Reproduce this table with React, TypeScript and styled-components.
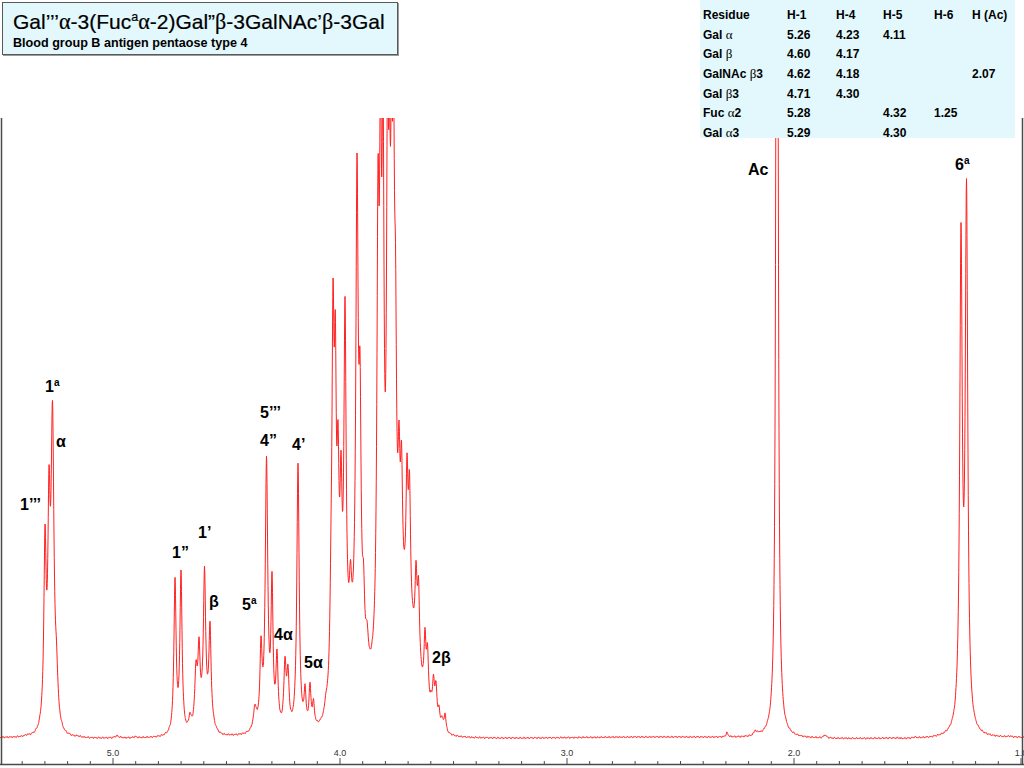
import React from "react";
import styled, { createGlobalStyle } from "styled-components";

const GlobalStyle = createGlobalStyle`
  html, body {
    margin: 0;
    padding: 0;
    background: #ffffff;
  }
  body {
    font-family: "Liberation Sans", Arial, sans-serif;
  }
`;

// chart geometry
const BASE = 738;
const TOP = 118;
const AXIS_Y = 764;
const ppmToX = (ppm: number) => 113 + (5 - ppm) * 227;

// [x, yTop, halfWidth] – narrow lines whose tops are matched
const LINES: [number, number, number][] = [
  // 5.3 region
  [45, 523, 1.3],
  [49, 463, 1.3],
  [52.5, 399, 1.7],
  [56.5, 640, 1.5],
  // 4.71
  [175, 577, 1.3],
  [181, 570, 1.3],
  // 4.62 / 4.60
  [190, 712, 1.5],
  [196, 660, 1.5],
  [199, 637, 1.3],
  [204.5, 566, 1.3],
  [210, 622, 1.3],
  // 4.3 region
  [255, 705, 2],
  [261, 637, 1.3],
  [266.5, 457, 1.5],
  [272, 572, 1.2],
  [277, 650, 1.3],
  [285, 657, 1.4],
  [288, 665, 1.3],
  [298, 464, 1.4],
  [305, 685, 1.2],
  [310, 683, 1.2],
  [313.5, 700, 1.2],
  [326, 692, 1.5],
  // big multiplet 4.05 – 3.55
  [331, 520, 1.3],
  [333, 278, 1.3],
  [335.3, 312, 1.2],
  [338, 420, 1.3],
  [341, 450, 1.3],
  [345, 296, 1.3],
  [350.5, 560, 1.3],
  [357, 153, 1.4],
  [360, 350, 1.3],
  [363.5, 560, 1.3],
  [367, 620, 1.5],
  [378, 157, 1.3],
  [380.5, 60, 1.2],
  [383, 60, 1.2],
  [387.5, 60, 1.2],
  [389.5, 100, 1.2],
  [391.5, 80, 1.2],
  [393.5, 60, 1.2],
  [395.5, 242, 1.2],
  [399, 420, 1.2],
  [401.5, 440, 1.2],
  [407, 452, 1.2],
  [409.5, 470, 1.2],
  [416, 560, 1.2],
  [418.5, 575, 1.2],
  [425, 627, 1.2],
  [427.5, 643, 1.2],
  [431, 690, 1.2],
  [433.5, 673, 1.2],
  [436, 680, 1.2],
  [439, 705, 1.2],
  [442, 715, 1.2],
  [445, 712, 1.2],
  // small baseline bumps
  [27, 734, 2],
  [78, 735, 2.5],
  [117, 735, 2.5],
  [135, 736, 2],
  [727, 733, 1.2],
  [755, 730, 1.3],
  [758, 731, 1.2],
  [825, 734, 1.5],
  [915, 736, 2],
  [1010, 736, 1.5],
  // acetyl singlet
  [777, -800, 1.0],
  // fucose H-6 doublet
  [961, 222, 1.5],
  [966.5, 178, 1.5],
];

// [x, height, sigma] – broad humps under the multiplets
const BROAD: [number, number, number][] = [
  [50, 24, 5],
  [205, 20, 6],
  [380, 40, 26],
  [405, 90, 12],
  [350, 50, 9],
];

const lor = (x: number, x0: number, w: number) => (w * w) / ((x - x0) * (x - x0) + w * w);
const gau = (x: number, x0: number, s: number) => Math.exp(-((x - x0) * (x - x0)) / (2 * s * s));

const broadAt = (x: number) => BROAD.reduce((s, [x0, h, sg]) => s + h * gau(x, x0, sg), 0);

const solveAmps = () => {
  const targets = LINES.map(([, y]) => BASE - y);
  const amps = targets.slice();
  for (let it = 0; it < 80; it++) {
    for (let i = 0; i < LINES.length; i++) {
      const xi = LINES[i][0];
      let other = broadAt(xi);
      for (let j = 0; j < LINES.length; j++) {
        if (j !== i) other += amps[j] * lor(xi, LINES[j][0], LINES[j][2]);
      }
      amps[i] = Math.max(0, targets[i] - other);
    }
  }
  return amps;
};

const buildSpectrum = () => {
  const amps = solveAmps();
  const pts: string[] = [];
  for (let x = 0; x <= 1024; x += 0.25) {
    let s = broadAt(x);
    for (let i = 0; i < LINES.length; i++) s += amps[i] * lor(x, LINES[i][0], LINES[i][2]);
    const noise =
      0.45 * Math.sin(x * 1.7) + 0.35 * Math.sin(x * 3.1 + 1) + 0.25 * Math.sin(x * 7.3 + 2);
    const drift = 0.8 * Math.sin(x / 60) + (x > 900 ? 0.6 : 0);
    const y = BASE + noise + drift - s;
    pts.push(`${x.toFixed(2)},${Math.max(y, -50).toFixed(2)}`);
  }
  return "M" + pts.join("L");
};

const SPECTRUM = buildSpectrum();

const TICKS = Array.from({ length: 46 }, (_, k) => {
  const ppm = 5.5 - k * 0.1;
  const major = Math.abs(ppm - Math.round(ppm)) < 0.001;
  return { x: ppmToX(ppm), major, label: major ? ppm.toFixed(1) : "" };
});

type PeakLabelType = { x: number; y: number; main: string; sup?: string };

const PEAK_LABELS: PeakLabelType[] = [
  { x: 45, y: 392, main: "1", sup: "a" },
  { x: 56, y: 447, main: "α" },
  { x: 20, y: 510, main: "1’’’" },
  { x: 172, y: 558, main: "1”" },
  { x: 198, y: 538, main: "1’" },
  { x: 209, y: 607, main: "β" },
  { x: 260, y: 418, main: "5’’’" },
  { x: 260, y: 446, main: "4”" },
  { x: 292, y: 450, main: "4’" },
  { x: 242, y: 610, main: "5", sup: "a" },
  { x: 274, y: 640, main: "4α" },
  { x: 304, y: 668, main: "5α" },
  { x: 432, y: 663, main: "2β" },
  { x: 748, y: 175, main: "Ac" },
  { x: 955, y: 170, main: "6", sup: "a" },
];

type ResidueRowType = {
  name: string;
  greek: string;
  suffix: string;
  values: string[];
};

const ROWS: ResidueRowType[] = [
  { name: "Gal", greek: "α", suffix: "", values: ["5.26", "4.23", "4.11", "", ""] },
  { name: "Gal", greek: "β", suffix: "", values: ["4.60", "4.17", "", "", ""] },
  { name: "GalNAc", greek: "β", suffix: "3", values: ["4.62", "4.18", "", "", "2.07"] },
  { name: "Gal", greek: "β", suffix: "3", values: ["4.71", "4.30", "", "", ""] },
  { name: "Fuc", greek: "α", suffix: "2", values: ["5.28", "", "4.32", "1.25", ""] },
  { name: "Gal", greek: "α", suffix: "3", values: ["5.29", "", "4.30", "", ""] },
];

const HEADERS = ["Residue", "H-1", "H-4", "H-5", "H-6", "H (Ac)"];

const Stage = styled.div`
  display: grid;
  width: 1024px;
  height: 768px;
  overflow: hidden;
  background: #ffffff;

  & > * {
    grid-area: 1 / 1;
  }
`;

const Chart = styled.svg`
  display: block;
  width: 1024px;
  height: 768px;
`;

const Overlay = styled.div`
  display: flex;
  justify-content: space-between;
  align-items: flex-start;
  padding: 0 9px 0 2px;
  z-index: 1;
  pointer-events: none;
`;

const TitleBox = styled.div`
  margin-top: 2px;
  width: 396px;
  height: 53px;
  box-sizing: border-box;
  background: #e3f8fc;
  border: 1px solid #5a5a5a;
  box-shadow: 1px 1px 0 #9a9a9a;
  padding: 7px 0 0 10px;
  display: flex;
  flex-direction: column;
  gap: 3px;
`;

const Title = styled.div`
  font-family: "Liberation Sans", Arial, sans-serif;
  font-size: 21px;
  line-height: 23px;
  color: #000;
  white-space: nowrap;
  -webkit-text-stroke: 0.2px #000;
`;

const Subtitle = styled.div`
  font-family: "Liberation Sans", Arial, sans-serif;
  font-size: 12.6px;
  font-weight: bold;
  line-height: 14px;
  color: #000;
  white-space: nowrap;
`;

const Greek = styled.span<{ $size?: number }>`
  font-family: "Liberation Serif", "Times New Roman", serif;
  font-weight: normal;
  font-size: ${(p) => (p.$size ? `${p.$size}px` : "1.05em")};
`;

const Sup = styled.sup`
  font-size: 0.6em;
  vertical-align: 0.6em;
  line-height: 0;
`;

const Table = styled.div`
  width: 315px;
  height: 138px;
  box-sizing: border-box;
  background: #e3f8fc;
  display: grid;
  grid-template-columns: 84px 49px 47px 51px 38px 1fr;
  grid-auto-rows: 19.7px;
  align-content: start;
  padding: 5px 0 0 3px;
  font-family: "Liberation Sans", Arial, sans-serif;
  font-size: 12px;
  font-weight: bold;
  color: #000;
`;

const Cell = styled.div`
  display: flex;
  align-items: center;
  white-space: nowrap;
`;

const Spectrum = styled.path`
  fill: none;
  stroke: #ff2020;
  stroke-width: 1;
  stroke-linejoin: round;
`;

const Frame = styled.line`
  stroke: #4a4a4a;
  stroke-width: 1.5;
`;

const Tick = styled.line`
  stroke: #4a4a4a;
  stroke-width: 1;
`;

const AxisLabel = styled.text`
  font-family: "Liberation Sans", Arial, sans-serif;
  font-size: 9px;
  fill: #333;
`;

const PeakLabel = styled.text`
  font-family: "Liberation Sans", Arial, sans-serif;
  font-size: 16px;
  font-weight: bold;
  fill: #000;
`;

const App: React.FC = () => {
  return (
    <>
      <GlobalStyle />
      <Stage>
        <Chart viewBox="0 0 1024 768">
          <defs>
            <clipPath id="plot-area">
              <rect x="0" y={TOP} width="1024" height={AXIS_Y - TOP} />
            </clipPath>
          </defs>
          <Spectrum d={SPECTRUM} clipPath="url(#plot-area)" />
          <Frame x1="1.5" y1={TOP} x2="1.5" y2={AXIS_Y} />
          <Frame x1="1022.5" y1={TOP} x2="1022.5" y2={AXIS_Y} />
          <Frame x1="0" y1={AXIS_Y + 0.5} x2="1024" y2={AXIS_Y + 0.5} />
          {TICKS.map((t) => (
            <g key={t.x}>
              <Tick x1={t.x} y1={AXIS_Y - (t.major ? 6 : 3)} x2={t.x} y2={AXIS_Y} />
              {t.label && (
                <AxisLabel x={t.x} y={756} textAnchor="middle">
                  {t.label}
                </AxisLabel>
              )}
            </g>
          ))}
          {PEAK_LABELS.map((l) => (
            <PeakLabel key={`${l.main}-${l.x}`} x={l.x} y={l.y}>
              {l.main}
              {l.sup && (
                <tspan fontSize="10" dy="-6">
                  {l.sup}
                </tspan>
              )}
            </PeakLabel>
          ))}
        </Chart>
        <Overlay>
          <TitleBox>
            <Title>
              Gal’’’<Greek>α</Greek>-3(Fuc<Sup>a</Sup>
              <Greek>α</Greek>-2)Gal”<Greek>β</Greek>-3GalNAc’<Greek>β</Greek>-3Gal
            </Title>
            <Subtitle>Blood group B antigen pentaose type 4</Subtitle>
          </TitleBox>
          <Table>
            {HEADERS.map((h) => (
              <Cell key={h}>{h}</Cell>
            ))}
            {ROWS.map((r) => (
              <React.Fragment key={`${r.name}${r.greek}${r.suffix}`}>
                <Cell>
                  {r.name}&nbsp;<Greek $size={13}>{r.greek}</Greek>
                  {r.suffix}
                </Cell>
                {r.values.map((v, i) => (
                  <Cell key={i}>{v}</Cell>
                ))}
              </React.Fragment>
            ))}
          </Table>
        </Overlay>
      </Stage>
    </>
  );
};

export default App;
